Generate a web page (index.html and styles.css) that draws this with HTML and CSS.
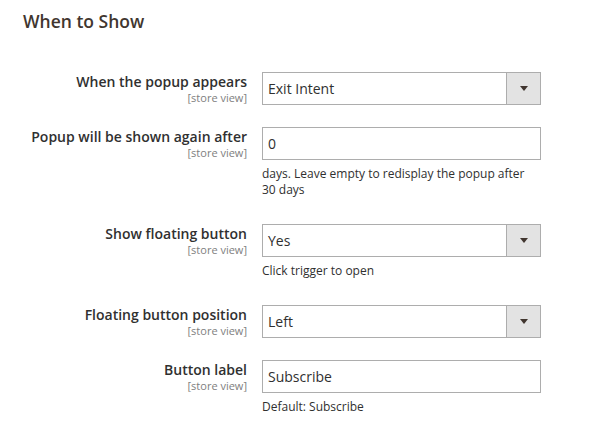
FILE: index.html
```html
<!DOCTYPE html>
<html>
<head>
<meta charset="utf-8">
<link rel="stylesheet" href="styles.css">
</head>
<body>
<div class="section">
  <h2 class="legend">When to Show</h2>
  <div class="form">
    <div class="field">
      <div class="label"><span class="label-text">When the popup appears</span><span class="scope">[store view]</span></div>
      <div class="control">
        <div class="select"><span class="value">Exit Intent</span><span class="arrow"></span></div>
      </div>
    </div>
    <div class="field with-note">
      <div class="label"><span class="label-text">Popup will be shown again after</span><span class="scope">[store view]</span></div>
      <div class="control">
        <div class="input"><span class="value">0</span></div>
        <p class="note">days. Leave empty to redisplay the popup after 30 days</p>
      </div>
    </div>
    <div class="field with-note">
      <div class="label"><span class="label-text">Show floating button</span><span class="scope">[store view]</span></div>
      <div class="control">
        <div class="select"><span class="value">Yes</span><span class="arrow"></span></div>
        <p class="note">Click trigger to open</p>
      </div>
    </div>
    <div class="field">
      <div class="label"><span class="label-text">Floating button position</span><span class="scope">[store view]</span></div>
      <div class="control">
        <div class="select"><span class="value">Left</span><span class="arrow"></span></div>
      </div>
    </div>
    <div class="field">
      <div class="label"><span class="label-text">Button label</span><span class="scope">[store view]</span></div>
      <div class="control">
        <div class="input"><span class="value">Subscribe</span></div>
        <p class="note">Default: Subscribe</p>
      </div>
    </div>
  </div>
</div>
</body>
</html>
```

FILE: styles.css
```css
* { box-sizing: border-box; }
html, body { margin: 0; padding: 0; background: #fff; }
body {
  font-family: "Open Sans", "Liberation Sans", sans-serif;
  color: #303030;
  width: 589px;
  height: 431px;
  overflow: hidden;
}
.section { padding: 11px 0 0 23px; }
.legend {
  margin: 0;
  font-size: 17.5px;
  font-weight: 600;
  line-height: 20px;
  color: #41362f;
}
.form {
  display: flex;
  flex-direction: column;
  gap: 22px;
  margin-top: 41px;
}
.field {
  display: grid;
  grid-template-columns: 224px 279px;
  column-gap: 15px;
}
.with-note { padding-bottom: 4px; }
.label {
  display: flex;
  flex-direction: column;
  align-items: flex-end;
  text-align: right;
}
.label-text {
  font-size: 14px;
  font-weight: 600;
  line-height: 19px;
  color: #303030;
}
.scope {
  font-size: 11px;
  line-height: 14px;
  color: #808080;
}
.select, .input {
  height: 33px;
  border: 1px solid #adadad;
  display: flex;
  align-items: center;
  background: #fff;
}
.value {
  flex: 1;
  padding-left: 5px;
  font-size: 14px;
  color: #303030;
  line-height: 19px;
}
.arrow {
  width: 34px;
  align-self: stretch;
  background: #e3e3e3;
  border-left: 1px solid #adadad;
  display: flex;
  align-items: center;
  justify-content: center;
}
.arrow::after {
  content: "";
  width: 0;
  height: 0;
  border-left: 4px solid transparent;
  border-right: 4px solid transparent;
  border-top: 5px solid #41362f;
}
.note {
  margin: 6px 0 0 0;
  font-size: 12px;
  line-height: 16px;
  color: #303030;
}
```
